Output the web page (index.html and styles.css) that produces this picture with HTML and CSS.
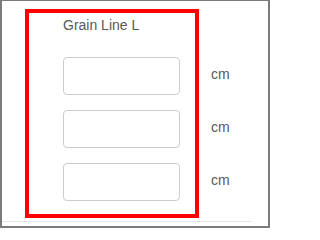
FILE: index.html
```html
<!DOCTYPE html>
<html>
<head>
<meta charset="utf-8">
<link rel="stylesheet" href="styles.css">
</head>
<body>
<div class="frame">
  <div class="row">
    <div class="panel">
      <div class="label">Grain Line L</div>
      <div class="inputs">
        <input class="field" type="text">
        <input class="field" type="text">
        <input class="field" type="text">
      </div>
    </div>
    <div class="units">
      <div class="unit">cm</div>
      <div class="unit">cm</div>
      <div class="unit">cm</div>
    </div>
  </div>
  <div class="rule"></div>
</div>
</body>
</html>
```
FILE: styles.css
```css
html, body {
  margin: 0;
  padding: 0;
  background: #ffffff;
}
.frame {
  box-sizing: border-box;
  width: 270px;
  height: 228px;
  border-style: solid;
  border-color: #7b7b7b;
  border-width: 1px 2px 2px 2px;
  background: #ffffff;
  font-family: "Liberation Sans", Arial, sans-serif;
  color: #595959;
  overflow: hidden;
}
.row {
  display: flex;
  align-items: flex-start;
  margin: 8px 0 0 23px;
}
.panel {
  box-sizing: border-box;
  width: 174px;
  height: 209px;
  border: 4px solid #ff0000;
  padding: 4px 0 0 34px;
}
.label {
  font-size: 14px;
  line-height: 16px;
  height: 16px;
}
.inputs {
  display: flex;
  flex-direction: column;
  gap: 15px;
  margin-top: 24px;
}
.field {
  box-sizing: border-box;
  width: 117px;
  height: 38px;
  margin: 0;
  padding: 0 8px;
  border: 1px solid #cccccc;
  border-radius: 4px;
  background: #ffffff;
  outline: none;
}
.units {
  display: flex;
  flex-direction: column;
  gap: 15px;
  margin: 46px 0 0 12px;
}
.unit {
  height: 38px;
  display: flex;
  align-items: center;
  font-size: 14px;
}
.rule {
  width: 250px;
  height: 1px;
  margin-top: 3px;
  background: #e6e6e6;
}
```
